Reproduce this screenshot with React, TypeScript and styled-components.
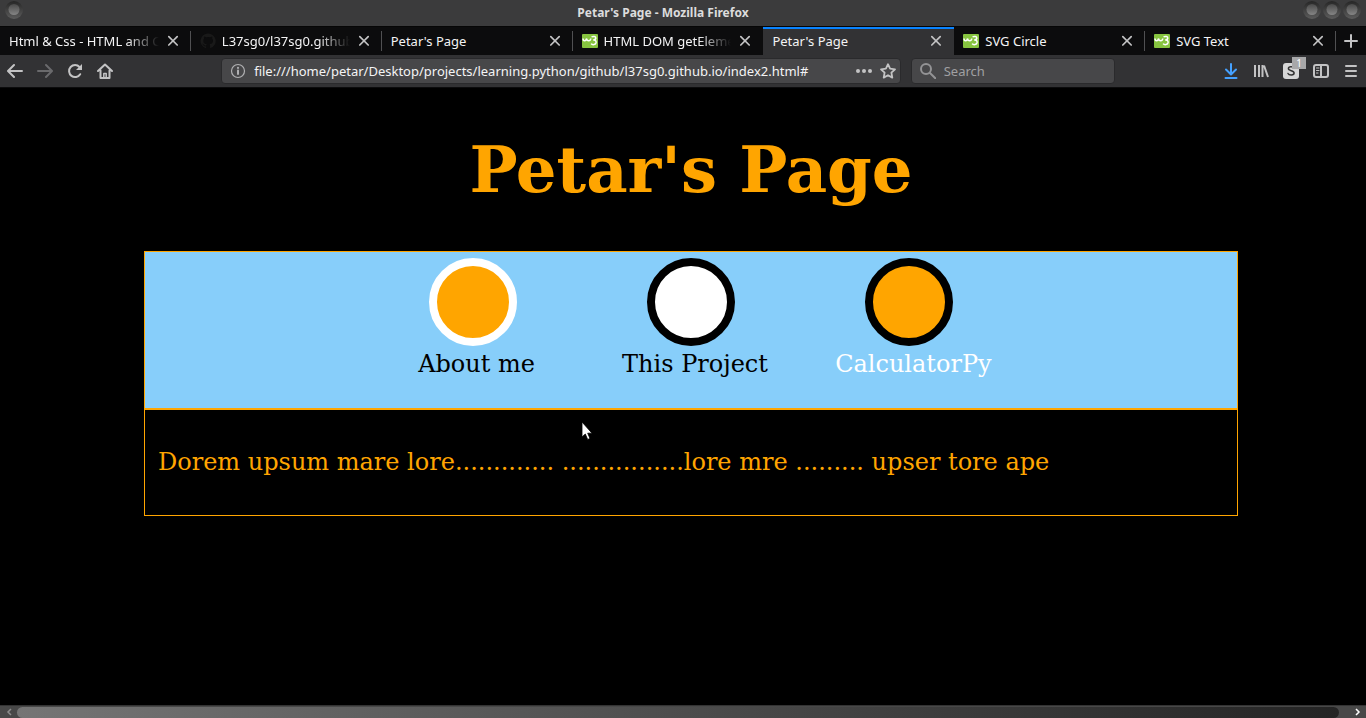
import React from "react";
import styled, { createGlobalStyle, css } from "styled-components";

const GlobalStyle = createGlobalStyle`
  *, *::before, *::after { box-sizing: border-box; }
  body { margin: 0; background: #000; }
  button, input { font: inherit; color: inherit; border: 0; background: none; padding: 0; margin: 0; }
`;

const Browser = styled.div`
  display: flex;
  flex-direction: column;
  min-height: 100vh;
  background: #000;
  color: #f4f4f5;
  font: 13px/18px "Noto Sans", sans-serif;
`;

const TitleBar = styled.header`
  display: grid;
  grid-template-columns: 80px 1fr 80px;
  align-items: center;
  height: 26px;
  padding: 0 4px;
  background: #3b3b3c;
`;

const WindowTitle = styled.div`
  text-align: center;
  font-size: 12px;
  font-weight: 700;
  color: #dcdcdc;
  padding-right: 40px;
`;

const WindowButtons = styled.div<{ $end?: boolean }>`
  display: flex;
  padding-bottom: 6px;
  justify-content: ${(p) => (p.$end ? "flex-end" : "flex-start")};
`;

const WindowButton = styled.button`
  display: flex;
  width: 20px;
  height: 20px;
`;

const TabStrip = styled.nav`
  display: grid;
  grid-template-columns: repeat(7, minmax(0, 1fr)) 30px;
  height: 29px;
  background: #0c0c0d;
  border-top: 1px solid #060606;
`;

const Tab = styled.div<{ $active?: boolean; $noLine?: boolean }>`
  display: flex;
  align-items: center;
  gap: 6px;
  padding: 0 10px 0 9px;
  position: relative;
  ${(p) =>
    p.$active
      ? css`
          background: #323234;
          box-shadow: inset 0 2px #0a84ff;
        `
      : !p.$noLine &&
        css`
          &::after {
            content: "";
            position: absolute;
            right: 0;
            top: 4px;
            bottom: 4px;
            width: 1px;
            background: #505052;
          }
        `}
`;

const TabLabel = styled.span<{ $fade?: boolean }>`
  flex: 1;
  overflow: hidden;
  white-space: nowrap;
  ${(p) =>
    p.$fade &&
    css`
      mask-image: linear-gradient(to left, transparent, #000 32px);
    `}
`;

const IconButton = styled.button<{ $color?: string }>`
  display: flex;
  align-items: center;
  justify-content: center;
  position: relative;
  flex: none;
  color: ${(p) => p.$color ?? "#c3c3c4"};
`;

const Toolbar = styled.div`
  display: flex;
  align-items: center;
  height: 33px;
  padding: 0 7px;
  background: #323234;
  border-bottom: 1px solid #0c0c0d;
`;

const Group = styled.div<{ $gap: number }>`
  display: flex;
  align-items: center;
  gap: ${(p) => p.$gap}px;
`;

const Fields = styled.div`
  display: flex;
  flex: 1;
  gap: 10px;
  margin: 0 8%;
`;

const Field = styled.label<{ $grow: number }>`
  display: flex;
  align-items: center;
  gap: 8px;
  height: 26px;
  padding: 0 4px 0 8px;
  flex: ${(p) => p.$grow} 1 0;
  min-width: 0;
  background: #474749;
  border: 1px solid #2a2a2c;
  border-radius: 4px;
  color: #b1b1b3;
`;

const TextInput = styled.input`
  flex: 1;
  min-width: 0;
  outline: none;
  color: #f4f4f5;
  &::placeholder {
    color: #a0a0a2;
    opacity: 1;
  }
`;

const Badge = styled.span`
  position: absolute;
  right: -7px;
  top: -6px;
  width: 14px;
  height: 12px;
  background: #a8a8a9;
  color: #fff;
  font-size: 10px;
  line-height: 12px;
`;

const Page = styled.main`
  flex: 1;
  padding: 44px 128px 0 144px;
  color: orange;
  font: 24px/28px "DejaVu Serif", serif;
`;

const Heading = styled.h1`
  margin: 0 0 44px;
  text-align: center;
  font-size: 64px;
  line-height: 75px;
`;

const Panel = styled.section`
  border: 1px solid orange;
`;

const Menu = styled.nav`
  display: grid;
  grid-template-columns: repeat(3, 20%);
  justify-content: center;
  height: 158px;
  padding-top: 6px;
  background: lightskyblue;
  border-bottom: 2px solid orange;
`;

const MenuLink = styled.a<{ $color: string }>`
  display: flex;
  flex-direction: column;
  align-items: center;
  gap: 4px;
  color: ${(p) => p.$color};
  text-decoration: none;
  white-space: nowrap;
`;

const Disc = styled.span<{ $fill: string; $ring: string }>`
  width: 88px;
  height: 88px;
  border-radius: 50%;
  background: ${(p) => p.$fill};
  border: 8px solid ${(p) => p.$ring};
`;

const MenuLabel = styled.span`
  padding-left: 8px;
`;

const Text = styled.p`
  margin: 0;
  padding: 38px 13px 39px;
`;

const Pointer = styled.svg`
  position: absolute;
  left: 581px;
  top: 421px;
`;

const ScrollBar = styled.div`
  display: flex;
  align-items: center;
  height: 13px;
  background: #484848;
  border-top: 1px solid #333;
`;

const ScrollArrow = styled.button`
  display: flex;
  align-items: center;
  justify-content: center;
  width: 17px;
`;

const ScrollThumb = styled.div`
  flex: 1;
  height: 11px;
  margin-right: 10px;
  border-radius: 6px;
  background: linear-gradient(to right, #757575, #242424);
`;

const Orb = ({ id }: { id: string }) => (
  <svg width="20" height="20" viewBox="0 0 20 20">
    <defs>
      <linearGradient id={id + "r"} x1="0" y1="0" x2="0" y2="1">
        <stop offset="0" stopColor="#262626" />
        <stop offset="1" stopColor="#5c5c5c" />
      </linearGradient>
      <linearGradient id={id + "c"} x1="0" y1="0" x2="0" y2="1">
        <stop offset="0" stopColor="#4a4a4a" />
        <stop offset="1" stopColor="#858585" />
      </linearGradient>
    </defs>
    <circle cx="10" cy="10" r="9" fill={`url(#${id}r)`} />
    <circle cx="10" cy="9.5" r="5.5" fill={`url(#${id}c)`} />
  </svg>
);

const Close = () => (
  <svg width="16" height="16" viewBox="0 0 16 16" stroke="currentColor" strokeWidth="1.7" strokeLinecap="round">
    <path d="M3.8 3.6l8.4 8.4M12.2 3.6L3.8 12" />
  </svg>
);

const W3 = () => (
  <svg width="16" height="14" viewBox="0 0 16 14" fill="none">
    <rect width="16" height="14" rx="1" fill="#87c440" />
    <path d="M1 4.500c0 3 3 3.200 3.600 0c.4 3.200 3.800 3 4.200 0M9.500 3c1.500-1 4.500-.8 4.300 1.100c-.1 1.500-1.600 1.800-2.600 1.800c1.500 0 3 .6 2.900 2.500c-.2 2.600-3.800 2.800-5 1.200" stroke="#fff" strokeWidth="1.5" />
  </svg>
);

const GitHub = () => (
  <svg width="16" height="16" viewBox="0 0 16 16">
    <path fill="#191919" d="M8 .5a7.500 7.500 0 0 0-2.400 14.600c.4.100.5-.2.5-.4v-1.400c-2.100.4-2.600-.9-2.600-.9c-.4-.9-.9-1.100-.9-1.100c-.7-.5.1-.5.1-.5c.8.100 1.200.8 1.200.8c.7 1.200 1.800.8 2.300.6c.1-.5.3-.8.5-1c-1.700-.2-3.400-.8-3.400-3.700c0-.8.300-1.500.8-2c-.1-.2-.4-1 .1-2c0 0 .6-.2 2.100.8a7 7 0 0 1 3.800 0c1.400-1 2-.8 2-.8c.5 1 .2 1.800.1 2c.5.500.8 1.200.8 2c0 2.900-1.700 3.500-3.400 3.700c.3.200.5.700.5 1.400v2.100c0 .2.100.5.500.4A7.500 7.500 0 0 0 8 .5z" />
  </svg>
);

const line = { fill: "none", stroke: "currentColor", strokeWidth: 2, strokeLinecap: "round", strokeLinejoin: "round" } as const;

const Icon = ({ children, ...rest }: React.SVGProps<SVGSVGElement>) => (
  <svg width="16" height="16" viewBox="0 0 16 16" {...line} {...rest}>
    {children}
  </svg>
);

const tabs = [
  { title: "Html & Css - HTML and CSS", fade: true },
  { title: "L37sg0/l37sg0.github.io", icon: <GitHub />, fade: true },
  { title: "Petar's Page" },
  { title: "HTML DOM getElementById", icon: <W3 />, fade: true, noLine: true },
  { title: "Petar's Page", active: true },
  { title: "SVG Circle", icon: <W3 /> },
  { title: "SVG Text", icon: <W3 /> },
];

const links = [
  { label: "About me", color: "#000", fill: "orange", ring: "#fff" },
  { label: "This Project", color: "#000", fill: "#fff", ring: "#000" },
  { label: "CalculatorPy", color: "#fff", fill: "orange", ring: "#000" },
];

export default function App() {
  return (
    <Browser>
      <GlobalStyle />
      <TitleBar>
        <WindowButtons>
          <WindowButton aria-label="Window menu"><Orb id="a" /></WindowButton>
        </WindowButtons>
        <WindowTitle>Petar's Page - Mozilla Firefox</WindowTitle>
        <WindowButtons $end>
          <WindowButton aria-label="Minimize"><Orb id="b" /></WindowButton>
          <WindowButton aria-label="Maximize"><Orb id="c" /></WindowButton>
          <WindowButton aria-label="Close"><Orb id="d" /></WindowButton>
        </WindowButtons>
      </TitleBar>
      <TabStrip>
        {tabs.map((t, i) => (
          <Tab key={i} $active={t.active} $noLine={t.noLine}>
            {t.icon}
            <TabLabel $fade={t.fade}>{t.title}</TabLabel>
            <IconButton aria-label="Close tab"><Close /></IconButton>
          </Tab>
        ))}
        <IconButton aria-label="New tab">
          <Icon><path d="M8 2v12M2 8h12" /></Icon>
        </IconButton>
      </TabStrip>
      <Toolbar>
        <Group $gap={14}>
          <IconButton aria-label="Back">
            <Icon><path d="M15 8H1.500M7 2L1 8l6 6" /></Icon>
          </IconButton>
          <IconButton aria-label="Forward" $color="#6a6a6c">
            <Icon><path d="M1 8h13.500M9 2l6 6-6 6" /></Icon>
          </IconButton>
          <IconButton aria-label="Reload">
            <Icon><path d="M13.200 11.200A6 6 0 1 1 12.500 4" /><path d="M15 1v6H9z" fill="currentColor" stroke="none" /></Icon>
          </IconButton>
          <IconButton aria-label="Home">
            <Icon><path d="M1 8l7-6.500L15 8M3.500 7.500V15h9V7.500" /><path d="M6.800 14v-3.500h2.400V14" strokeWidth="1.500" /></Icon>
          </IconButton>
        </Group>
        <Fields>
          <Field $grow={7}>
            <Icon strokeWidth="1.200"><circle cx="8" cy="8" r="6.500" /><path d="M8 7.500v3.500M8 4.800v.2" strokeWidth="2" /></Icon>
            <TextInput aria-label="Address" defaultValue="file:///home/petar/Desktop/projects/learning.python/github/l37sg0.github.io/index2.html#" />
            <IconButton aria-label="Page actions">
              <Icon fill="currentColor" stroke="none"><circle cx="2" cy="8" r="2" /><circle cx="8" cy="8" r="2" /><circle cx="14" cy="8" r="2" /></Icon>
            </IconButton>
            <IconButton aria-label="Bookmark">
              <Icon strokeWidth="1.800"><path d="M8 1.200l2.100 4.500 4.900.6-3.600 3.400.9 4.900L8 12.200l-4.300 2.400.9-4.900L1 6.300l4.900-.6z" /></Icon>
            </IconButton>
          </Field>
          <Field $grow={2}>
            <Icon color="#939395"><circle cx="6" cy="6" r="5" /><path d="M10 10l5.500 5.500" /></Icon>
            <TextInput aria-label="Search" placeholder="Search" />
          </Field>
        </Fields>
        <Group $gap={14}>
          <IconButton aria-label="Downloads" $color="#45a1ff">
            <Icon><path d="M8 1v10M3 6.500l5 5 5-5M2.500 15h11" /></Icon>
          </IconButton>
          <IconButton aria-label="Library">
            <Icon strokeLinecap="butt"><path d="M2 2v12M6 2v12M9.500 2v12M11 2.500l4 11.500" /></Icon>
          </IconButton>
          <IconButton aria-label="Extension">
            <Icon><rect width="16" height="16" rx="3" fill="#d6d6d6" stroke="none" /><path d="M11 5c-.8-1.600-5.600-1.800-5.600.6c0 2.800 5.700 1.500 5.700 4.400c0 2.600-5.200 2.400-6.100.5" stroke="#333" strokeWidth="1.500" /></Icon>
            <Badge>1</Badge>
          </IconButton>
          <IconButton aria-label="Sidebar">
            <Icon><rect x="1" y="2" width="14" height="12" rx="2" /><path d="M8 2v12" /><path d="M3.500 5H6M3.500 7.500H6M3.500 10H5" strokeWidth="1" /></Icon>
          </IconButton>
          <IconButton aria-label="Menu">
            <Icon><path d="M3 3h10M3 8h10M3 13h10" /></Icon>
          </IconButton>
        </Group>
      </Toolbar>
      <Page>
        <Heading>Petar's Page</Heading>
        <Panel>
          <Menu>
            {links.map((l) => (
              <MenuLink key={l.label} href="#" $color={l.color}>
                <Disc $fill={l.fill} $ring={l.ring} />
                <MenuLabel>{l.label}</MenuLabel>
              </MenuLink>
            ))}
          </Menu>
          <Text>Dorem upsum mare lore............. ................lore mre ......... upser tore ape</Text>
        </Panel>
      </Page>
      <ScrollBar>
        <ScrollArrow aria-label="Scroll left">
          <svg width="6" height="8" viewBox="0 0 6 8" fill="none" stroke="#8c8c8c" strokeWidth="1.500"><path d="M5 1L2 4l3 3" /></svg>
        </ScrollArrow>
        <ScrollThumb />
        <ScrollArrow aria-label="Scroll right">
          <svg width="6" height="8" viewBox="0 0 6 8" fill="none" stroke="#fff" strokeWidth="1.500"><path d="M1 1l3 3-3 3" /></svg>
        </ScrollArrow>
      </ScrollBar>
      <Pointer width="12" height="20" viewBox="0 0 12 20">
        <path d="M1 1v15l3.300-3 2.400 5.500 2.300-1-2.300-5.300H11z" fill="#fff" stroke="#000" strokeWidth=".8" />
      </Pointer>
    </Browser>
  );
}
